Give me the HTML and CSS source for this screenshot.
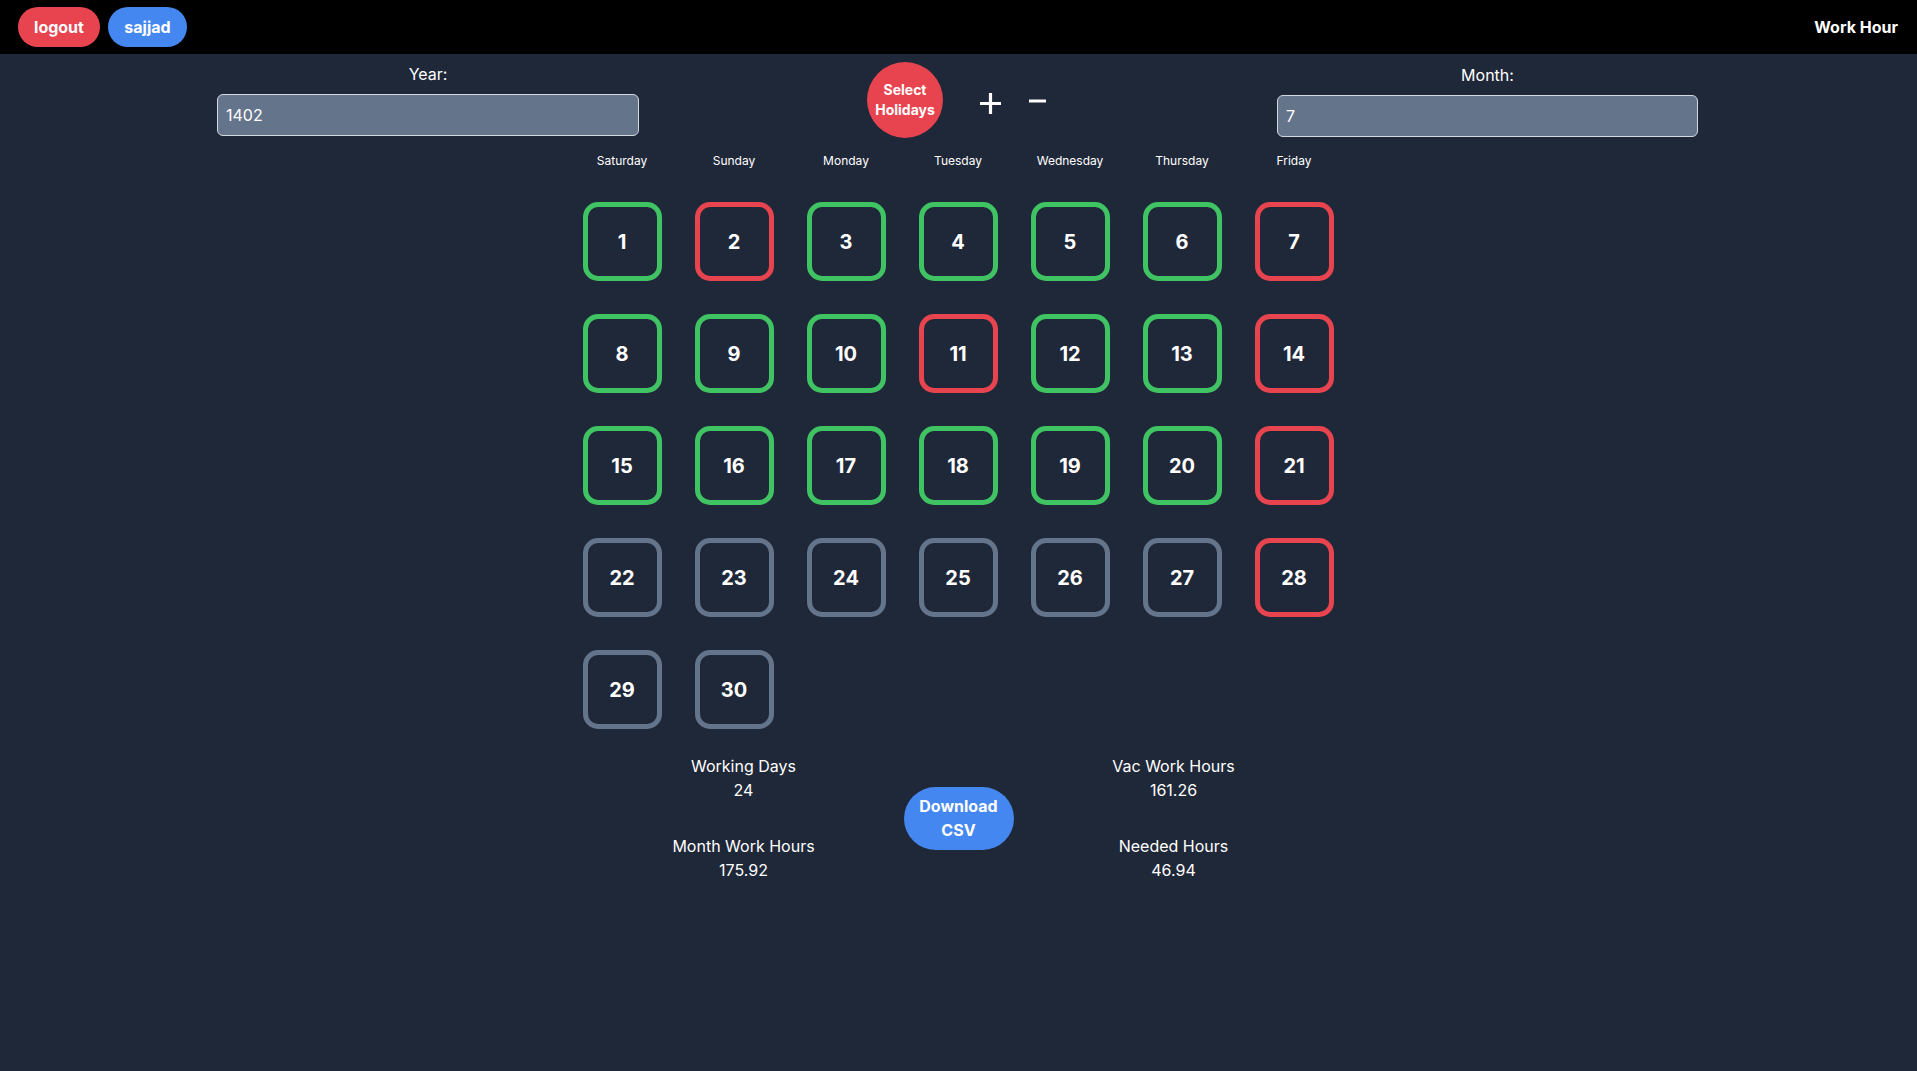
FILE: index.html
```html
<!DOCTYPE html>
<html lang="en">
<head>
<meta charset="utf-8">
<title>Work Hour</title>
<link rel="stylesheet" href="styles.css">
</head>
<body>
<nav class="navbar">
  <div class="nav-left">
    <button class="pill pill-red">logout</button>
    <button class="pill pill-blue">sajjad</button>
  </div>
  <div class="brand">Work Hour</div>
</nav>
<main class="page">
  <section class="controls">
    <div class="field">
      <label class="field-label">Year:</label>
      <input class="field-input" type="text" value="1402">
    </div>
    <div class="actions">
      <button class="holiday-btn">Select Holidays</button>
      <button class="icon-btn plus-btn" aria-label="add">
        <svg width="23" height="23" viewBox="0 0 23 23"><path d="M11.5 1v21M1 11.5h21" stroke="#fff" stroke-width="3.2" fill="none"/></svg>
      </button>
      <button class="icon-btn minus-btn" aria-label="remove">
        <svg width="17" height="4" viewBox="0 0 17 4"><path d="M0 2h17" stroke="#fff" stroke-width="3" fill="none"/></svg>
      </button>
    </div>
    <div class="field field-month">
      <label class="field-label">Month:</label>
      <input class="field-input" type="text" value="7">
    </div>
  </section>

  <section class="calendar">
    <div class="dayname">Saturday</div>
    <div class="dayname">Sunday</div>
    <div class="dayname">Monday</div>
    <div class="dayname">Tuesday</div>
    <div class="dayname">Wednesday</div>
    <div class="dayname">Thursday</div>
    <div class="dayname">Friday</div>

    <div class="day work">1</div>
    <div class="day off">2</div>
    <div class="day work">3</div>
    <div class="day work">4</div>
    <div class="day work">5</div>
    <div class="day work">6</div>
    <div class="day off">7</div>

    <div class="day work">8</div>
    <div class="day work">9</div>
    <div class="day work">10</div>
    <div class="day off">11</div>
    <div class="day work">12</div>
    <div class="day work">13</div>
    <div class="day off">14</div>

    <div class="day work">15</div>
    <div class="day work">16</div>
    <div class="day work">17</div>
    <div class="day work">18</div>
    <div class="day work">19</div>
    <div class="day work">20</div>
    <div class="day off">21</div>

    <div class="day future">22</div>
    <div class="day future">23</div>
    <div class="day future">24</div>
    <div class="day future">25</div>
    <div class="day future">26</div>
    <div class="day future">27</div>
    <div class="day off">28</div>

    <div class="day future">29</div>
    <div class="day future">30</div>
  </section>

  <section class="stats">
    <div class="stat-col">
      <div class="stat"><div>Working Days</div><div>24</div></div>
      <div class="stat"><div>Month Work Hours</div><div>175.92</div></div>
    </div>
    <button class="download-btn">Download CSV</button>
    <div class="stat-col">
      <div class="stat"><div>Vac Work Hours</div><div>161.26</div></div>
      <div class="stat"><div>Needed Hours</div><div>46.94</div></div>
    </div>
  </section>
</main>
</body>
</html>
```

FILE: styles.css
```css
* { box-sizing: border-box; }

html, body {
  margin: 0;
  padding: 0;
  background: #1f2838;
  min-height: 100%;
}

body {
  font-family: Inter, "Noto Sans", "Liberation Sans", sans-serif;
  color: #ffffff;
  min-height: 1071px;
}

button {
  font-family: inherit;
  border: none;
  cursor: pointer;
  color: #fff;
}

.navbar {
  height: 54px;
  background: #000;
  display: flex;
  align-items: center;
  justify-content: space-between;
  padding: 0 19px 0 18px;
}

.nav-left {
  display: flex;
  gap: 8px;
}

.pill {
  height: 40px;
  border-radius: 20px;
  font-size: 16px;
  font-weight: 700;
  padding: 0 13px;
  margin-top: -1px;
}

.pill-red { background: #e8444f; width: 82px; }
.pill-blue { background: #4587f1; width: 79px; }

.brand {
  font-family: Inter, sans-serif;
  font-weight: 700;
  font-size: 16px;
  margin-top: -1px;
}

.page {
  display: flex;
  flex-direction: column;
  align-items: center;
}

.controls {
  display: flex;
  justify-content: flex-start;
  align-items: flex-start;
  padding: 8px 0 0 217px;
  width: 100%;
}

.field {
  width: 422px;
  display: flex;
  flex-direction: column;
  align-items: center;
}

.field-month {
  width: 421px;
  margin-left: 231px;
  padding-top: 1px;
}

.field-label {
  font-size: 16px;
  line-height: 24px;
  margin-bottom: 8px;
}

.field-input {
  width: 100%;
  height: 42px;
  background: #64748b;
  border: 1px solid #d4d9e0;
  border-radius: 6px;
  color: #fff;
  font-family: inherit;
  font-size: 16px;
  padding: 0 8px;
  outline: none;
}

.actions {
  display: flex;
  align-items: center;
  width: 179px;
  margin-left: 228px;
}

.holiday-btn {
  width: 76px;
  height: 76px;
  border-radius: 50%;
  background: #e8444f;
  font-size: 14px;
  font-weight: 700;
  line-height: 20px;
  padding: 0 6px;
}

.icon-btn {
  background: transparent;
  padding: 0;
  display: flex;
  align-items: center;
  justify-content: center;
}

.plus-btn {
  margin-left: 36px;
  margin-top: 6px;
}

.minus-btn {
  margin-left: 27px;
  margin-top: 2px;
}

.calendar {
  display: grid;
  grid-template-columns: repeat(7, 79px);
  column-gap: 33px;
  row-gap: 33px;
  margin-top: 15px;
  margin-left: -1px;
}

.dayname {
  font-size: 12px;
  line-height: 16px;
  text-align: center;
  white-space: nowrap;
  margin: 0 -16px;
}

.day {
  width: 79px;
  height: 79px;
  border: 5px solid;
  border-radius: 15px;
  display: flex;
  align-items: center;
  justify-content: center;
  font-size: 20px;
  font-weight: 700;
}

.day.work { border-color: #40c463; }
.day.off { border-color: #e8444f; }
.day.future { border-color: #64748b; }

.stats {
  display: flex;
  align-items: center;
  gap: 60px;
  margin-top: 25px;
}

.stat-col {
  width: 200px;
  display: flex;
  flex-direction: column;
  gap: 32px;
}

.stat {
  text-align: center;
  font-size: 16px;
  line-height: 24px;
}

.download-btn {
  width: 110px;
  height: 63px;
  border-radius: 32px;
  background: #4587f1;
  font-size: 16px;
  font-weight: 700;
  line-height: 24px;
  padding: 0 10px;
}
```
